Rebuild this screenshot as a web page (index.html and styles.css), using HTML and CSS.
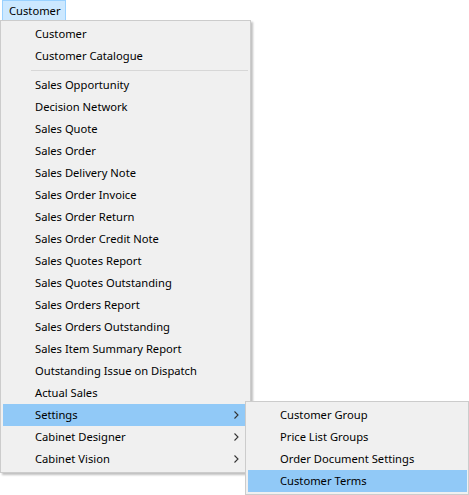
FILE: index.html
```html
<!DOCTYPE html>
<html>
<head>
<meta charset="utf-8">
<link rel="stylesheet" href="styles.css">
</head>
<body>
<div class="page">
  <div class="menubar">
    <div class="menubar-item">Customer</div>
  </div>
  <div class="menu main-menu">
    <div class="item">Customer</div>
    <div class="item">Customer Catalogue</div>
    <div class="sep"></div>
    <div class="item">Sales Opportunity</div>
    <div class="item">Decision Network</div>
    <div class="item">Sales Quote</div>
    <div class="item">Sales Order</div>
    <div class="item">Sales Delivery Note</div>
    <div class="item">Sales Order Invoice</div>
    <div class="item">Sales Order Return</div>
    <div class="item">Sales Order Credit Note</div>
    <div class="item">Sales Quotes Report</div>
    <div class="item">Sales Quotes Outstanding</div>
    <div class="item">Sales Orders Report</div>
    <div class="item">Sales Orders Outstanding</div>
    <div class="item">Sales Item Summary Report</div>
    <div class="item">Outstanding Issue on Dispatch</div>
    <div class="item">Actual Sales</div>
    <div class="item active has-sub"><span>Settings</span><svg class="chev" width="5" height="8" viewBox="0 0 5 8"><path d="M0.5 0.5 L4 4 L0.5 7.5" fill="none" stroke="#333" stroke-width="1.1"/></svg></div>
    <div class="item has-sub"><span>Cabinet Designer</span><svg class="chev" width="5" height="8" viewBox="0 0 5 8"><path d="M0.5 0.5 L4 4 L0.5 7.5" fill="none" stroke="#333" stroke-width="1.1"/></svg></div>
    <div class="item has-sub"><span>Cabinet Vision</span><svg class="chev" width="5" height="8" viewBox="0 0 5 8"><path d="M0.5 0.5 L4 4 L0.5 7.5" fill="none" stroke="#333" stroke-width="1.1"/></svg></div>
  </div>
  <div class="menu sub-menu">
    <div class="item">Customer Group</div>
    <div class="item">Price List Groups</div>
    <div class="item">Order Document Settings</div>
    <div class="item active">Customer Terms</div>
  </div>
</div>
</body>
</html>
```
FILE: styles.css
```css
html, body {
  margin: 0;
  padding: 0;
  background: #ffffff;
}
body {
  font-family: "Noto Sans", "Open Sans", sans-serif;
  font-size: 11.2px;
  color: #000000;
}
.page {
  position: relative;
  width: 469px;
  height: 495px;
  overflow: hidden;
}
.menubar {
  display: flex;
  height: 20px;
}
.menubar-item {
  box-sizing: border-box;
  margin-left: 2px;
  width: 64px;
  height: 20px;
  padding-left: 6px;
  line-height: 19px;
  background: #cce8ff;
  border: 1px solid #99d1ff;
  border-bottom: none;
}
.menu {
  box-sizing: border-box;
  background: #f0f0f0;
  border: 1px solid #cccccc;
  padding: 2px;
  display: flex;
  flex-direction: column;
  box-shadow: 2px 2px 2px rgba(0, 0, 0, 0.25);
}
.main-menu {
  width: 251px;
}
.item {
  height: 22px;
  line-height: 22px;
  padding-left: 32px;
  display: flex;
  align-items: center;
  white-space: nowrap;
}
.item span, .item {
  padding-top: 0;
}
.item.active {
  background: #91c9f7;
}
.has-sub {
  justify-content: space-between;
  padding-right: 9px;
}
.chev {
  display: block;
}
.sep {
  height: 7px;
  display: flex;
  align-items: center;
  padding-left: 28px;
}
.sep::before {
  content: "";
  display: block;
  flex: 1;
  height: 1px;
  background: #d7d7d7;
}
.sub-menu {
  position: absolute;
  left: 245px;
  top: 401px;
  width: 224px;
  padding: 2px 1px 2px 2px;
}
```
